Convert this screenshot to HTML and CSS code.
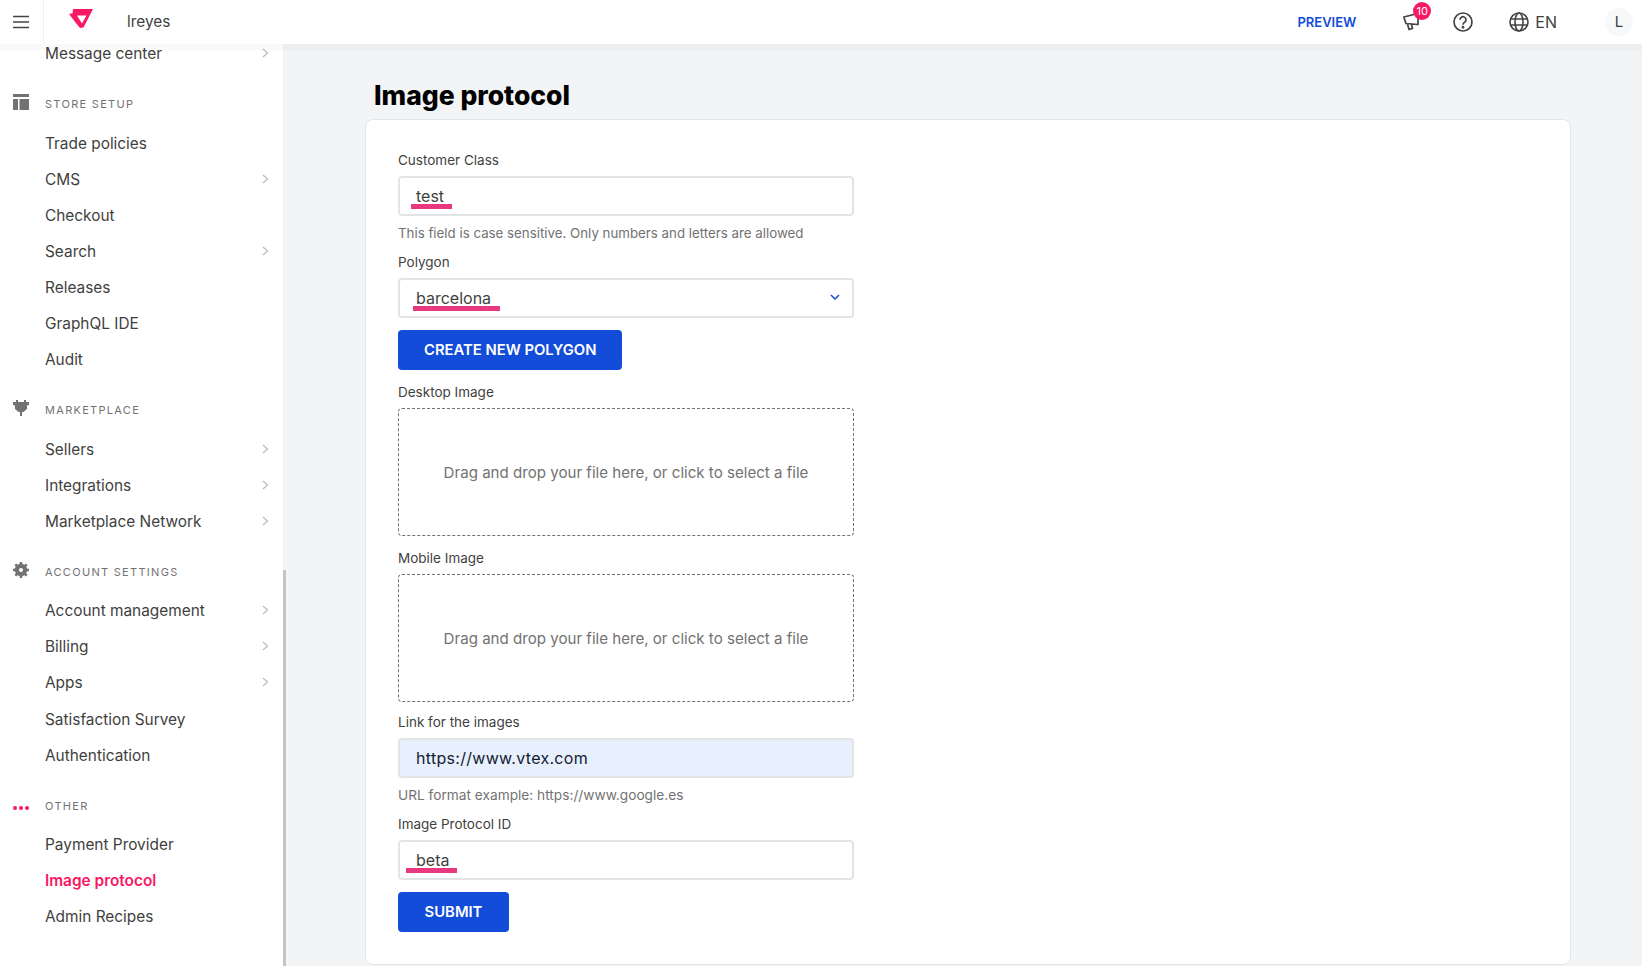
FILE: index.html
```html
<!DOCTYPE html>
<html lang="en">
<head>
  <meta charset="UTF-8">
  <title>Image protocol</title>
  <link rel="stylesheet" href="styles.css">
</head>
<body>

  <header class="topbar">
    <div class="menu-btn">
      <svg width="16" height="14" viewBox="0 0 16 14"><path d="M0 1.500h16M0 7h16M0 12.500h16" stroke="#444" stroke-width="1.700"/></svg>
    </div>
    <svg class="logo" width="24" height="20" viewBox="0 0 24 20"><path fill-rule="evenodd" fill="#f71963" d="M4 0.500C3.500 0 3.500 0 4.500 0H24L14.500 18.500 11 19 6.500 13.500.8 6C0 5 .5 4.500 1.500 4.500H3.500zM8 6.500l5 8 4.500-8z"/></svg>
    <span class="account">lreyes</span>
    <a class="preview">PREVIEW</a>
    <div class="notif">
      <svg width="18" height="18" viewBox="0 0 18 18" fill="none" stroke="#444" stroke-width="1.700" stroke-linejoin="round"><path d="M.8 4 15 .5v11L3 10.500zM4.500 11 6 16.500l3.500-1-1-4"/></svg>
      <span class="badge">10</span>
    </div>
    <svg class="help" width="20" height="20" viewBox="0 0 20 20" fill="none" stroke="#444" stroke-width="1.700"><circle cx="10" cy="10" r="9"/><path d="M7 7.800a3 3 0 1 1 4.600 2.500C10.500 11 10 11.500 10 12.800"/><circle cx="10" cy="15.200" r=".6" fill="#444"/></svg>
    <div class="lang">
      <svg width="20" height="20" viewBox="0 0 20 20" fill="none" stroke="#444" stroke-width="1.600"><circle cx="10" cy="10" r="9"/><ellipse cx="10" cy="10" rx="4" ry="9"/><path d="M1.500 7h17M1.500 13h17"/></svg>
      <span>EN</span>
    </div>
    <div class="avatar">L</div>
  </header>

  <div class="layout">
    <nav class="sidebar">
      <a class="nav-item first">Message center<svg class="chev" width="7" height="10" viewBox="0 0 7 10"><path d="M1 1l4.500 4L1 9" fill="none" stroke="#bbb" stroke-width="1.200"/></svg></a>

      <div class="nav-title">
        <svg class="nav-icon" width="16" height="16" viewBox="0 0 16 16" fill="#727273"><path d="M0 0h16v3H0zM0 5h5v11H0zM6.500 5H16v11H6.500z"/></svg>
        STORE SETUP
      </div>
      <a class="nav-item">Trade policies</a>
      <a class="nav-item">CMS<svg class="chev" width="7" height="10" viewBox="0 0 7 10"><path d="M1 1l4.500 4L1 9" fill="none" stroke="#bbb" stroke-width="1.200"/></svg></a>
      <a class="nav-item">Checkout</a>
      <a class="nav-item">Search<svg class="chev" width="7" height="10" viewBox="0 0 7 10"><path d="M1 1l4.500 4L1 9" fill="none" stroke="#bbb" stroke-width="1.200"/></svg></a>
      <a class="nav-item">Releases</a>
      <a class="nav-item">GraphQL IDE</a>
      <a class="nav-item">Audit</a>

      <div class="nav-title">
        <svg class="nav-icon" width="16" height="16" viewBox="0 0 16 16" fill="#727273"><path d="M0 2h3V0h2v2h6V0h2v2h3v3l-2 .5V9l-3.500 3H9v4H7v-4H5.500L2 9V5.500L0 5z"/></svg>
        MARKETPLACE
      </div>
      <a class="nav-item">Sellers<svg class="chev" width="7" height="10" viewBox="0 0 7 10"><path d="M1 1l4.500 4L1 9" fill="none" stroke="#bbb" stroke-width="1.200"/></svg></a>
      <a class="nav-item">Integrations<svg class="chev" width="7" height="10" viewBox="0 0 7 10"><path d="M1 1l4.500 4L1 9" fill="none" stroke="#bbb" stroke-width="1.200"/></svg></a>
      <a class="nav-item">Marketplace Network<svg class="chev" width="7" height="10" viewBox="0 0 7 10"><path d="M1 1l4.500 4L1 9" fill="none" stroke="#bbb" stroke-width="1.200"/></svg></a>

      <div class="nav-title tight">
        <svg class="nav-icon" width="16" height="16" viewBox="0 0 16 16"><circle cx="8" cy="8" r="4.500" fill="none" stroke="#727273" stroke-width="3.400"/><path d="M8 8V0M8 8v8M8 8H0M8 8h16M8 8 2.300 2.300M8 8l5.700 5.700M8 8l5.700-5.700M8 8l-5.700 5.700" stroke="#727273" stroke-width="2.600" stroke-dasharray="7.500 20" stroke-dashoffset="-0.500"/><circle cx="8" cy="8" r="2" fill="#fff"/></svg>
        ACCOUNT SETTINGS
      </div>
      <a class="nav-item">Account management<svg class="chev" width="7" height="10" viewBox="0 0 7 10"><path d="M1 1l4.500 4L1 9" fill="none" stroke="#bbb" stroke-width="1.200"/></svg></a>
      <a class="nav-item">Billing<svg class="chev" width="7" height="10" viewBox="0 0 7 10"><path d="M1 1l4.500 4L1 9" fill="none" stroke="#bbb" stroke-width="1.200"/></svg></a>
      <a class="nav-item">Apps<svg class="chev" width="7" height="10" viewBox="0 0 7 10"><path d="M1 1l4.500 4L1 9" fill="none" stroke="#bbb" stroke-width="1.200"/></svg></a>
      <a class="nav-item gap">Satisfaction Survey</a>
      <a class="nav-item">Authentication</a>

      <div class="nav-title tight">
        <svg class="nav-icon dots" width="16" height="4" viewBox="0 0 16 4" fill="#f71963"><circle cx="2" cy="2" r="2"/><circle cx="8" cy="2" r="2"/><circle cx="14" cy="2" r="2"/></svg>
        OTHER
      </div>
      <a class="nav-item">Payment Provider</a>
      <a class="nav-item active">Image protocol</a>
      <a class="nav-item">Admin Recipes</a>
    </nav>
    <div class="scroll-thumb"></div>

    <main class="content">
      <h1>Image protocol</h1>
      <form class="card">
        <label>Customer Class</label>
        <div class="field"><span class="mark mark-test">test</span></div>
        <p class="help-text">This field is case sensitive. Only numbers and letters are allowed</p>

        <label>Polygon</label>
        <div class="field select"><span class="mark mark-poly">barcelona</span>
          <svg width="10" height="6" viewBox="0 0 10 6"><path d="M1 1l4 4 4-4" fill="none" stroke="#134cd8" stroke-width="1.500"/></svg>
        </div>
        <button type="button" class="btn spaced">CREATE NEW POLYGON</button>

        <label>Desktop Image</label>
        <div class="dropzone">Drag and drop your file here, or click to select a file</div>

        <label>Mobile Image</label>
        <div class="dropzone tight">Drag and drop your file here, or click to select a file</div>

        <label>Link for the images</label>
        <div class="field autofill">https://www.vtex.com</div>
        <p class="help-text url-hint">URL format example: https://www.google.es</p>

        <label>Image Protocol ID</label>
        <div class="field"><span class="mark mark-beta">beta</span></div>
        <button type="button" class="btn submit">SUBMIT</button>
      </form>
    </main>
  </div>

</body>
</html>
```

FILE: styles.css
```css
* {
  box-sizing: border-box;
}

html, body {
  height: 100%;
}

body {
  margin: 0;
  font-family: Inter, "Liberation Sans", sans-serif;
  font-size: 15.400px;
  color: #3f3f40;
  background-color: #f2f4f5;
  overflow: hidden;
}

.topbar {
  position: relative;
  z-index: 2;
  display: flex;
  align-items: center;
  height: 44px;
  background-color: #fff;
  box-shadow: 0 6px 0 rgba(0, 0, 0, .025);
}

.menu-btn {
  display: flex;
  align-items: center;
  justify-content: center;
  width: 44px;
  height: 44px;
  border-right: 1px solid #f0f1f2;
  padding-right: 2px;
}

.logo {
  margin-left: 25px;
  margin-top: -6px;
}

.account {
  margin-left: 34px;
  margin-top: -2px;
}

.preview {
  margin-left: auto;
  color: #134cd8;
  font-size: 13px;
  font-weight: 600;
}

.notif {
  position: relative;
  margin-left: 47px;
  width: 18px;
  height: 18px;
}

.badge {
  position: absolute;
  top: -11px;
  left: 10px;
  width: 18px;
  height: 18px;
  border-radius: 50%;
  background-color: #f71963;
  color: #fff;
  font-size: 11px;
  line-height: 18px;
  text-align: center;
}

.help {
  margin-left: 32px;
}

.lang {
  display: flex;
  align-items: center;
  gap: 6px;
  margin-left: 36px;
  font-size: 16px;
}

.avatar {
  width: 28px;
  height: 28px;
  margin: 0 9px 0 48px;
  border-radius: 50%;
  background-color: #f7f8f9;
  font-size: 15px;
  line-height: 28px;
  text-align: center;
}

.layout {
  position: relative;
  display: flex;
  height: calc(100% - 44px);
}

.sidebar {
  flex: 0 0 283px;
  background-color: #fff;
  overflow: hidden;
}

.scroll-thumb {
  position: absolute;
  top: 526px;
  left: 283px;
  bottom: 0;
  width: 3px;
  background-color: #c4c4c4;
}

.nav-item {
  display: flex;
  align-items: center;
  justify-content: space-between;
  height: 36px;
  padding: 0 14px 0 45px;
}

.nav-item.first {
  margin-top: -9px;
}

.nav-item.gap {
  margin-top: 1px;
}

.nav-item.active {
  color: #f71963;
  font-weight: 600;
}

.nav-title {
  position: relative;
  height: 22px;
  margin: 22px 0 10px;
  padding-left: 45px;
  color: #727273;
  font-size: 11px;
  line-height: 22px;
  letter-spacing: 1.300px;
}

.nav-title.tight {
  margin-bottom: 9px;
}

.nav-icon {
  position: absolute;
  left: 13px;
  top: 1px;
}

.nav-icon.dots {
  top: 11px;
}

.content {
  flex: 1;
  padding: 0 71px 0 83px;
}

h1 {
  margin: 31px 0 0 8px;
  height: 44px;
  color: #000;
  font-size: 26.500px;
  line-height: 40px;
  font-weight: 800;
}

.card {
  display: flex;
  flex-direction: column;
  align-items: flex-start;
  height: 846px;
  margin-left: -1px;
  padding: 32px;
  background-color: #fff;
  border: 1px solid #e3e4e6;
  border-radius: 8px;
}

label {
  height: 16px;
  margin-bottom: 8px;
  font-size: 13.500px;
  line-height: 16px;
}

.field {
  display: flex;
  align-items: center;
  justify-content: space-between;
  width: 456px;
  height: 40px;
  padding: 0 16px;
  background-color: #fff;
  border: 2px solid #e3e4e6;
  border-radius: 4px;
  font-size: 16px;
}

.field svg {
  margin: -2px -4px 0 0;
}

.field.autofill {
  background-color: #e8f0fe;
  color: #142032;
  letter-spacing: .3px;
}

.mark {
  position: relative;
}

/* pink underlines that sit over the field values */
.mark::after {
  content: "";
  position: absolute;
  bottom: -3px;
  height: 5px;
  background-color: #e8387f;
}

.mark-test::after {
  left: -5px;
  width: 41px;
}

.mark-poly::after {
  left: -3px;
  width: 87px;
}

.mark-beta::after {
  left: -10px;
  width: 51px;
}

.help-text {
  height: 16px;
  margin: 8px 0 14px;
  color: #727273;
  font-size: 13.300px;
  line-height: 18px;
}

.help-text.url-hint {
  font-size: 13.700px;
}

.btn {
  height: 40px;
  margin-top: 12px;
  padding: 0 26px;
  background-color: #134cd8;
  border: 0;
  border-radius: 4px;
  color: #fff;
  font-family: inherit;
  font-size: 14.800px;
  font-weight: 600;
}

.btn.spaced {
  margin-bottom: 14px;
}

.btn.submit {
  width: 111px;
  padding: 0;
}

.dropzone {
  display: flex;
  align-items: center;
  justify-content: center;
  width: 456px;
  height: 128px;
  margin-bottom: 14px;
  border: 1px dashed #727273;
  border-radius: 4px;
  color: #727273;
  font-size: 15.100px;
}

.dropzone.tight {
  margin-bottom: 12px;
}
```
